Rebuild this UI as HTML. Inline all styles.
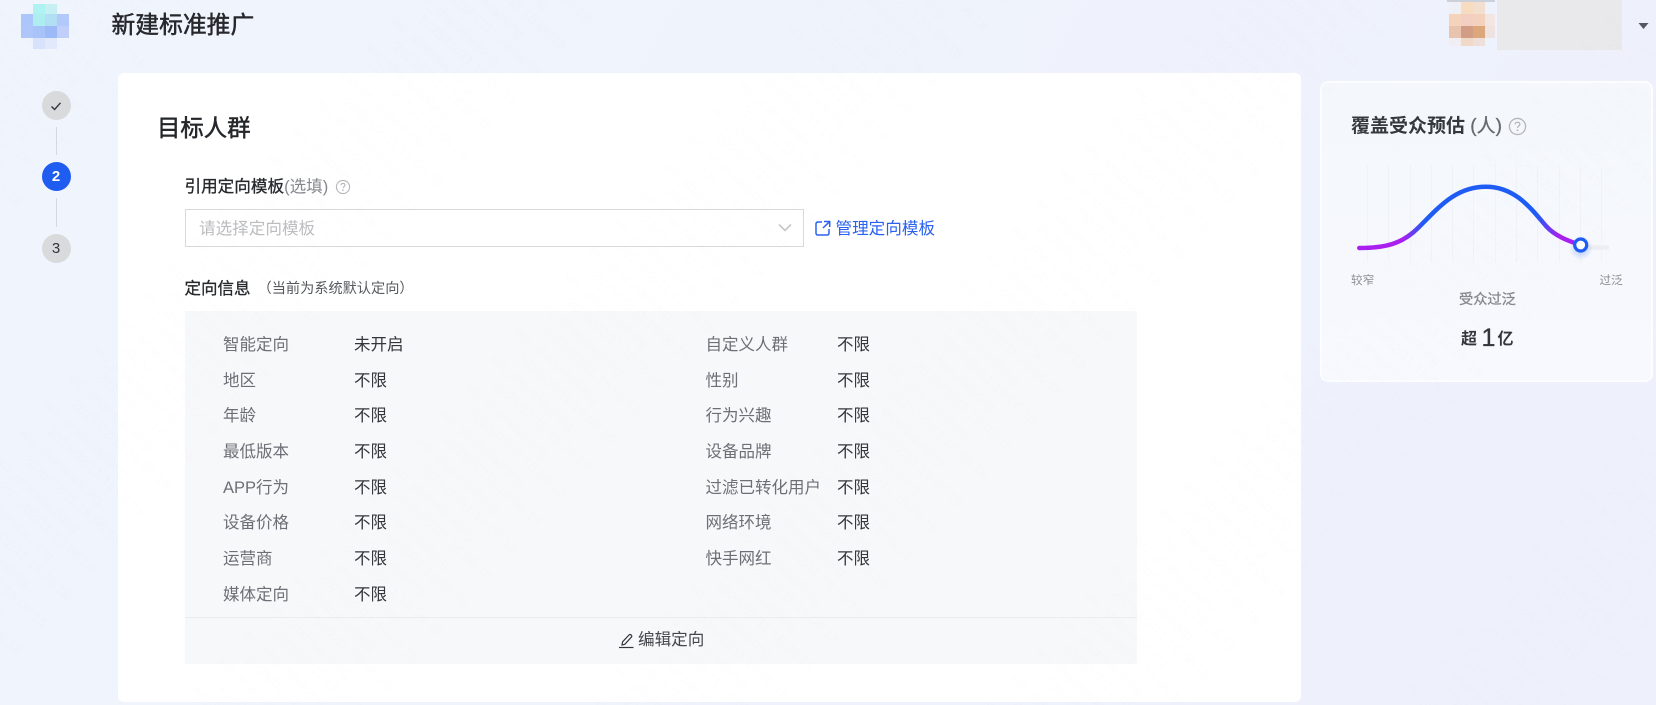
<!DOCTYPE html>
<html lang="zh">
<head>
<meta charset="utf-8">
<title>新建标准推广</title>
<style>
html,body{margin:0;padding:0}
body{width:1656px;height:705px;position:relative;overflow:hidden;background:linear-gradient(120deg,#f0f4fd 0%,#eff3fc 45%,#eef0fc 100%);font-family:"Liberation Sans","Noto Sans CJK SC",sans-serif;color:#1f2329}
.t{position:absolute;white-space:nowrap;line-height:24px;height:24px}
.b{position:absolute}
.lb{font-size:16.5px;color:#6c7076}
.v{font-size:16.5px;color:#33363a}
.m{-webkit-text-stroke:.3px currentColor}
.card{position:absolute;left:118px;top:73px;width:1183px;height:629px;background:#fff;border-radius:6px}
.side{position:absolute;left:1320px;top:81px;width:333px;height:301px;box-sizing:border-box;background:linear-gradient(180deg,#f4f7fc,#f7f9fe);border:2px solid #fcfdff;border-radius:8px}
.panel{position:absolute;left:185px;top:311px;width:952px;height:353px;background:#f7f8fa}
.circle{position:absolute;left:41.5px;width:29px;height:29px;border-radius:50%;background:#d9dadc;text-align:center;line-height:29px;font-size:15px;color:#33363a}
.line{position:absolute;left:55.5px;width:1px;background:#d6d8dc}
</style>
</head>
<body>
<!-- logo blocks -->
<div class="b" style="left:33px;top:4px;width:12px;height:10px;background:#aef2f1"></div>
<div class="b" style="left:45px;top:4px;width:12px;height:10px;background:#c6f0f3"></div>
<div class="b" style="left:21px;top:14px;width:12px;height:12px;background:#acc5fb"></div>
<div class="b" style="left:33px;top:14px;width:12px;height:12px;background:#aeeef0"></div>
<div class="b" style="left:45px;top:14px;width:12px;height:12px;background:#b2dff4"></div>
<div class="b" style="left:57px;top:14px;width:12px;height:12px;background:#b3c9fb"></div>
<div class="b" style="left:21px;top:26px;width:12px;height:12px;background:#aec6fa"></div>
<div class="b" style="left:33px;top:26px;width:12px;height:12px;background:#a8c3fa"></div>
<div class="b" style="left:45px;top:26px;width:12px;height:12px;background:#9dbaf8"></div>
<div class="b" style="left:57px;top:26px;width:12px;height:12px;background:#bfcffa"></div>
<div class="b" style="left:33px;top:38px;width:12px;height:11px;background:#d7e2fb"></div>
<div class="b" style="left:45px;top:38px;width:12px;height:11px;background:#e2e9fc"></div>
<div class="b" style="left:81px;top:14px;width:11px;height:24px;background:#f1f4fb"></div>

<div class="t" style="left:111.5px;top:14px;font-size:23.8px;-webkit-text-stroke:.5px #26282c;color:#26282c;line-height:24px">新建标准推广</div>

<!-- avatar -->
<div class="b" style="left:1447px;top:0;width:48px;height:2px;background:#ccd0da"></div>
<div class="b" style="left:1449px;top:2px;width:12px;height:12px;background:#eff0f5"></div>
<div class="b" style="left:1461px;top:2px;width:12px;height:12px;background:#f8dcc0"></div>
<div class="b" style="left:1473px;top:2px;width:12px;height:12px;background:#f3dfd0"></div>
<div class="b" style="left:1449px;top:14px;width:12px;height:12px;background:#f5d3bb"></div>
<div class="b" style="left:1461px;top:14px;width:12px;height:12px;background:#f2cfc2"></div>
<div class="b" style="left:1473px;top:14px;width:12px;height:12px;background:#f3d1bd"></div>
<div class="b" style="left:1485px;top:14px;width:10px;height:12px;background:#f1e6e2"></div>
<div class="b" style="left:1449px;top:26px;width:12px;height:12px;background:#e8c4ae"></div>
<div class="b" style="left:1461px;top:26px;width:12px;height:12px;background:#d39c84"></div>
<div class="b" style="left:1473px;top:26px;width:12px;height:12px;background:#dca77a"></div>
<div class="b" style="left:1485px;top:26px;width:10px;height:12px;background:#efe3e1"></div>
<div class="b" style="left:1449px;top:38px;width:12px;height:8px;background:#f0eef3"></div>
<div class="b" style="left:1461px;top:38px;width:12px;height:8px;background:#f0d9c6"></div>
<div class="b" style="left:1473px;top:38px;width:12px;height:8px;background:#eedfdb"></div>
<div class="b" style="left:1497px;top:0;width:125px;height:50px;background:#e9e9eb"></div>
<svg class="b" style="left:1638px;top:22px" width="11" height="8"><path d="M0.5 1H10.5L5.5 7Z" fill="#54575d"/></svg>

<!-- steps -->
<div class="circle" style="top:91px">
<svg width="14" height="14" viewBox="0 0 14 14" style="margin-top:7.5px;display:block;margin-left:7.5px"><path d="M2.5 7.5L5.6 10.5L11.5 3.8" fill="none" stroke="#33363a" stroke-width="1.4"/></svg>
</div>
<div class="line" style="top:127px;height:28px"></div>
<div class="circle" style="top:162px;background:#1f5cf0;color:#fff;font-weight:700">2</div>
<div class="line" style="top:198px;height:29px"></div>
<div class="circle" style="top:234px">3</div>

<!-- main card -->
<div class="card"></div>
<div class="t" style="left:157px;top:116px;font-size:23.4px;-webkit-text-stroke:.5px #25272b;color:#25272b">目标人群</div>

<div class="t" style="left:184.5px;top:175px;font-size:16.6px;color:#26282c"><span class="m">引用定向模板</span><span style="color:#85888e">(选填)</span></div>
<svg class="b" style="left:335px;top:179px" width="16" height="16" viewBox="0 0 16 16"><circle cx="8" cy="8" r="6.6" fill="none" stroke="#b4b6ba" stroke-width="1.1"/><path d="M6 6.3C6 5 7 4.4 8 4.4C9.1 4.4 10 5.1 10 6.2C10 7.6 8 7.6 8 9.3" fill="none" stroke="#b4b6ba" stroke-width="1.1"/><circle cx="8" cy="11.2" r=".8" fill="#b4b6ba"/></svg>

<div class="b" style="left:185px;top:209px;width:619px;height:38px;box-sizing:border-box;border:1px solid #d9d9db;background:#fff"></div>
<div class="t" style="left:199px;top:216.5px;font-size:16.6px;color:#bcbdc0">请选择定向模板</div>
<svg class="b" style="left:777px;top:222px" width="16" height="12" viewBox="0 0 16 12"><path d="M2 2.5L8 8.5L14 2.5" fill="none" stroke="#c6c7c9" stroke-width="1.6"/></svg>

<svg class="b" style="left:814px;top:219px" width="18" height="18" viewBox="0 0 18 18"><path d="M8 3H4Q2 3 2 5V14Q2 16 4 16H13Q15 16 15 14V10" fill="none" stroke="#2a62ef" stroke-width="1.5"/><path d="M10 2.5H15.7V8M15.5 2.7L9 9" fill="none" stroke="#2a62ef" stroke-width="1.5"/></svg>
<div class="t" style="left:835.5px;top:216.5px;font-size:16.6px;color:#2a62ef">管理定向模板</div>

<div class="t m" style="left:184.5px;top:277px;font-size:16.5px;color:#26282c">定向信息</div>
<div class="t" style="left:257.5px;top:277px;font-size:14.2px;color:#55585e">（当前为系统默认定向）</div>

<!-- panel -->
<div class="panel"></div>
<div class="t lb" style="left:223px;top:332.5px">智能定向</div><div class="t v" style="left:354px;top:332.5px">未开启</div>
<div class="t lb" style="left:223px;top:368.5px">地区</div><div class="t v" style="left:354px;top:368.5px">不限</div>
<div class="t lb" style="left:223px;top:404px">年龄</div><div class="t v" style="left:354px;top:404px">不限</div>
<div class="t lb" style="left:223px;top:439.5px">最低版本</div><div class="t v" style="left:354px;top:439.5px">不限</div>
<div class="t lb" style="left:223px;top:475.5px">APP行为</div><div class="t v" style="left:354px;top:475.5px">不限</div>
<div class="t lb" style="left:223px;top:511px">设备价格</div><div class="t v" style="left:354px;top:511px">不限</div>
<div class="t lb" style="left:223px;top:547px">运营商</div><div class="t v" style="left:354px;top:547px">不限</div>
<div class="t lb" style="left:223px;top:583px">媒体定向</div><div class="t v" style="left:354px;top:583px">不限</div>

<div class="t lb" style="left:705.5px;top:332.5px">自定义人群</div><div class="t v" style="left:837px;top:332.5px">不限</div>
<div class="t lb" style="left:705.5px;top:368.5px">性别</div><div class="t v" style="left:837px;top:368.5px">不限</div>
<div class="t lb" style="left:705.5px;top:404px">行为兴趣</div><div class="t v" style="left:837px;top:404px">不限</div>
<div class="t lb" style="left:705.5px;top:439.5px">设备品牌</div><div class="t v" style="left:837px;top:439.5px">不限</div>
<div class="t lb" style="left:705.5px;top:475.5px">过滤已转化用户</div><div class="t v" style="left:837px;top:475.5px">不限</div>
<div class="t lb" style="left:705.5px;top:511px">网络环境</div><div class="t v" style="left:837px;top:511px">不限</div>
<div class="t lb" style="left:705.5px;top:547px">快手网红</div><div class="t v" style="left:837px;top:547px">不限</div>

<div class="b" style="left:185px;top:616.5px;width:952px;height:1.5px;background:#ebecee"></div>
<svg class="b" style="left:618px;top:632px" width="17" height="17" viewBox="0 0 17 17"><path d="M1 15.5H15.5" stroke="#33363a" stroke-width="1.2" fill="none"/><path d="M4 13L4.6 9.8L11 3Q12 2 13.2 3Q14.3 4.2 13.3 5.2L6.8 12.3Z" fill="none" stroke="#33363a" stroke-width="1.2"/></svg>
<div class="t" style="left:638px;top:628px;font-size:16.6px;color:#44474c">编辑定向</div>

<!-- side card -->
<div class="side"></div>
<div class="t" style="left:1351px;top:114.5px;font-size:19px;font-weight:700;color:#35383d">覆盖受众预估 <span class="m" style="font-weight:400;color:#666a70">(人)</span></div>
<svg class="b" style="left:1507.5px;top:116.5px" width="19" height="19" viewBox="0 0 16 16"><circle cx="8" cy="8" r="6.8" fill="none" stroke="#b4b6ba" stroke-width="1.1"/><path d="M6 6.3C6 5 7 4.4 8 4.4C9.1 4.4 10 5.1 10 6.2C10 7.6 8 7.6 8 9.3" fill="none" stroke="#b4b6ba" stroke-width="1.1"/><circle cx="8" cy="11.2" r=".8" fill="#b4b6ba"/></svg>

<svg class="b" style="left:0;top:0" width="1656" height="705" viewBox="0 0 1656 705">
<defs>
<linearGradient id="g" gradientUnits="userSpaceOnUse" x1="1359" y1="0" x2="1581" y2="0">
<stop offset="0" stop-color="#ab1ff0"/><stop offset=".2" stop-color="#a820f0"/><stop offset=".29" stop-color="#1f5cf5"/><stop offset=".8" stop-color="#1f5cf5"/><stop offset=".9" stop-color="#a820f0"/><stop offset="1" stop-color="#a820f0"/>
</linearGradient>
<radialGradient id="gl"><stop offset="0" stop-color="#1f5cf5" stop-opacity=".35"/><stop offset="1" stop-color="#1f5cf5" stop-opacity="0"/></radialGradient>
</defs>
<g stroke="#f0f2f6" stroke-width="1">
<path d="M1367.5 165V262M1388.5 165V262M1410.5 165V262M1431.5 165V262M1452.5 165V262M1473.5 165V262M1495.5 165V262M1516.5 165V262M1537.5 165V262M1559.5 165V262M1580.5 165V262M1601.5 165V262"/>
</g>
<path d="M1581 247.5H1607" stroke="#eceef1" stroke-width="4.5" stroke-linecap="round" fill="none"/>
<path d="M1359.3 248C1385 248 1402 244 1418 228C1440 206 1456 186.7 1486 186.7C1516 186.7 1532 210 1546 226C1555 236 1568 241 1581 245" fill="none" stroke="url(#g)" stroke-width="4.5" stroke-linecap="round"/>
<circle cx="1581" cy="248" r="12" fill="url(#gl)"/>
<circle cx="1580.7" cy="245" r="6" fill="#fff" stroke="#1f5cf5" stroke-width="3.2"/>
</svg>

<div class="t" style="left:1351px;top:268.5px;font-size:11.6px;color:#8b8e93">较窄</div>
<div class="t" style="left:1599.5px;top:268.5px;font-size:11.6px;color:#8b8e93">过泛</div>
<div class="t m" style="left:1459px;top:287.5px;font-size:14.2px;color:#85888d">受众过泛</div>
<div class="t" style="left:1461px;top:328px;font-size:16px;font-weight:700;color:#33363b">超</div>
<div class="t m" style="left:1481.5px;top:326px;font-size:25px;color:#33363b">1</div>
<div class="t" style="left:1497.5px;top:328px;font-size:16px;font-weight:700;color:#33363b">亿</div>

<!-- watermark -->
<svg class="b" style="left:0;top:0;pointer-events:none" width="1656" height="705">
<defs><pattern id="wm" width="300" height="37" patternUnits="userSpaceOnUse" patternTransform="rotate(42)">
<text x="4" y="14" font-family="Liberation Sans" font-size="14" fill="#000" fill-opacity=".009">wo_shanxiaolong</text>
<text x="24" y="32" font-family="Liberation Sans" font-size="14" fill="#000" fill-opacity=".009">2025/02/11 16:06:18</text>
</pattern></defs>
<rect width="1656" height="705" fill="url(#wm)"/>
</svg>
</body>
</html>
